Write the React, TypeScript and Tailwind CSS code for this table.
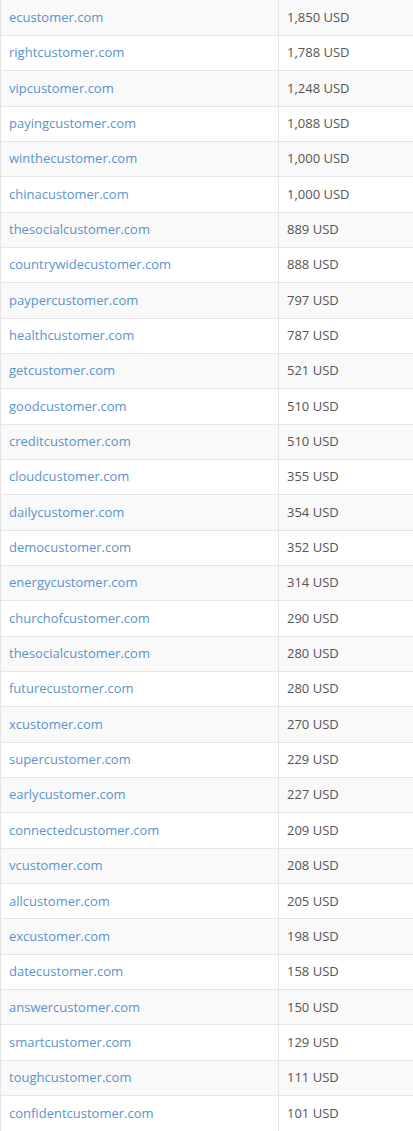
import React from "react";

const rows: [string, string][] = [
  ["ecustomer.com", "1,850 USD"],
  ["rightcustomer.com", "1,788 USD"],
  ["vipcustomer.com", "1,248 USD"],
  ["payingcustomer.com", "1,088 USD"],
  ["winthecustomer.com", "1,000 USD"],
  ["chinacustomer.com", "1,000 USD"],
  ["thesocialcustomer.com", "889 USD"],
  ["countrywidecustomer.com", "888 USD"],
  ["paypercustomer.com", "797 USD"],
  ["healthcustomer.com", "787 USD"],
  ["getcustomer.com", "521 USD"],
  ["goodcustomer.com", "510 USD"],
  ["creditcustomer.com", "510 USD"],
  ["cloudcustomer.com", "355 USD"],
  ["dailycustomer.com", "354 USD"],
  ["democustomer.com", "352 USD"],
  ["energycustomer.com", "314 USD"],
  ["churchofcustomer.com", "290 USD"],
  ["thesocialcustomer.com", "280 USD"],
  ["futurecustomer.com", "280 USD"],
  ["xcustomer.com", "270 USD"],
  ["supercustomer.com", "229 USD"],
  ["earlycustomer.com", "227 USD"],
  ["connectedcustomer.com", "209 USD"],
  ["vcustomer.com", "208 USD"],
  ["allcustomer.com", "205 USD"],
  ["excustomer.com", "198 USD"],
  ["datecustomer.com", "158 USD"],
  ["answercustomer.com", "150 USD"],
  ["smartcustomer.com", "129 USD"],
  ["toughcustomer.com", "111 USD"],
  ["confidentcustomer.com", "101 USD"],
];

export default function App() {
  return (
    <div className="w-[413px] bg-white font-['Open_Sans',sans-serif] text-[13px]">
      <table className="w-full border-collapse border-l border-[#e3e3e3]">
        <tbody>
          {rows.map(([domain, price], i) => (
            <tr
              key={i}
              className={`h-[35.35px] border-b border-[#e6e6e6] ${
                i % 2 === 0 ? "bg-[#f9f9f9]" : "bg-white"
              }`}
            >
              <td className="w-[278px] border-r border-[#e6e6e6] pl-2 align-middle">
                <a href="#" className="text-[#5b93cc]">
                  {domain}
                </a>
              </td>
              <td className="pl-2 align-middle text-[#555555]">{price}</td>
            </tr>
          ))}
        </tbody>
      </table>
    </div>
  );
}
